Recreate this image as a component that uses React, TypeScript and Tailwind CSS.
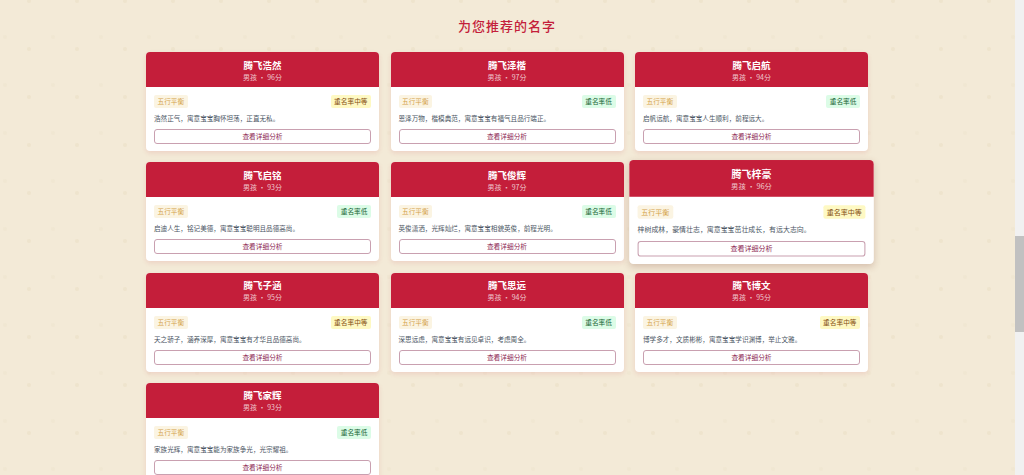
const names = [
  { name: "腾飞浩然", score: 96, rate: "中等", desc: "浩然正气，寓意宝宝胸怀坦荡，正直无私。" },
  { name: "腾飞泽楷", score: 97, rate: "低", desc: "恩泽万物，楷模典范，寓意宝宝有福气且品行端正。" },
  { name: "腾飞启航", score: 94, rate: "低", desc: "启帆远航，寓意宝宝人生顺利，前程远大。" },
  { name: "腾飞启铭", score: 93, rate: "低", desc: "启迪人生，铭记美德，寓意宝宝聪明且品德高尚。" },
  { name: "腾飞俊辉", score: 97, rate: "低", desc: "英俊潇洒，光辉灿烂，寓意宝宝相貌英俊，前程光明。" },
  { name: "腾飞梓豪", score: 96, rate: "中等", desc: "梓树成林，豪情壮志，寓意宝宝茁壮成长，有远大志向。", hovered: true },
  { name: "腾飞子涵", score: 95, rate: "中等", desc: "天之骄子，涵养深厚，寓意宝宝有才华且品德高尚。" },
  { name: "腾飞思远", score: 94, rate: "低", desc: "深思远虑，寓意宝宝有远见卓识，考虑周全。" },
  { name: "腾飞博文", score: 95, rate: "中等", desc: "博学多才，文质彬彬，寓意宝宝学识渊博，举止文雅。" },
  { name: "腾飞家辉", score: 93, rate: "低", desc: "家族光辉，寓意宝宝能为家族争光，光宗耀祖。" },
];

function NameCard({ name, score, rate, desc, hovered }: (typeof names)[number]) {
  return (
    <div
      className={
        "overflow-hidden rounded-[4px] bg-white " +
        (hovered
          ? "scale-[1.05] translate-y-[0.5px] shadow-[0_2px_7px_rgba(120,60,40,0.24)]"
          : "shadow-[0_2px_5px_rgba(196,30,58,0.12)]")
      }
    >
      <div className="flex h-[35px] flex-col items-center justify-center bg-[#c41e3a] text-white">
        <div className="text-[9.5px] leading-[14px] font-bold">{name}</div>
        <div className="text-[7px] leading-[10px] text-white/75">男孩 · {score}分</div>
      </div>
      <div className="px-2 pt-2 pb-[7px]">
        <div className="flex items-center justify-between">
          <span className="rounded-[2px] bg-[#fbf4e2] px-[3.5px] text-[6.7px] leading-[13px] text-[#d4a24a]">五行平衡</span>
          <span
            className={
              "rounded-[2px] px-[3.5px] text-[6.7px] leading-[13px] " +
              (rate === "低" ? "bg-[#dcfce7] text-[#166534]" : "bg-[#fef9c3] text-[#854d0e]")
            }
          >
            重名率{rate}
          </span>
        </div>
        <p className="mt-[5px] text-[6.6px] leading-[11px] text-[#4b5563]">{desc}</p>
        <button className="mt-[5px] block h-[15px] w-full rounded-[3px] border border-[#c9a0b0] bg-white text-center text-[6.7px] leading-[13px] text-[#8e2a55]">
          查看详细分析
        </button>
      </div>
    </div>
  );
}

export default function App() {
  return (
    <div className="flex h-[475px] overflow-hidden bg-[#f3ead7] font-['Noto_Sans_CJK_SC','Noto_Sans',sans-serif]">
      <main className="flex-1 bg-[radial-gradient(circle,#eee4cd_1.5px,transparent_2.5px),radial-gradient(circle,#f0e7d2_1.5px,transparent_2.5px)] bg-[length:48px_48px,48px_48px] bg-[position:5px_-23px,-19px_13px] pt-[16px] pr-px">
        <h2 className="text-center text-[13px] leading-[20px] font-medium tracking-[1px] text-[#c41e3a]">为您推荐的名字</h2>
        <div className="mx-auto mt-[16px] grid w-[722px] grid-cols-3 gap-x-[11.5px] gap-y-[11.3px]">
          {names.map((n) => (
            <NameCard key={n.name} {...n} />
          ))}
        </div>
      </main>
      <div className="flex w-[9px] flex-col bg-[#f1f1f1]">
        <div className="mt-[236px] h-[96px] bg-[#c1c1c1]" />
      </div>
    </div>
  );
}
